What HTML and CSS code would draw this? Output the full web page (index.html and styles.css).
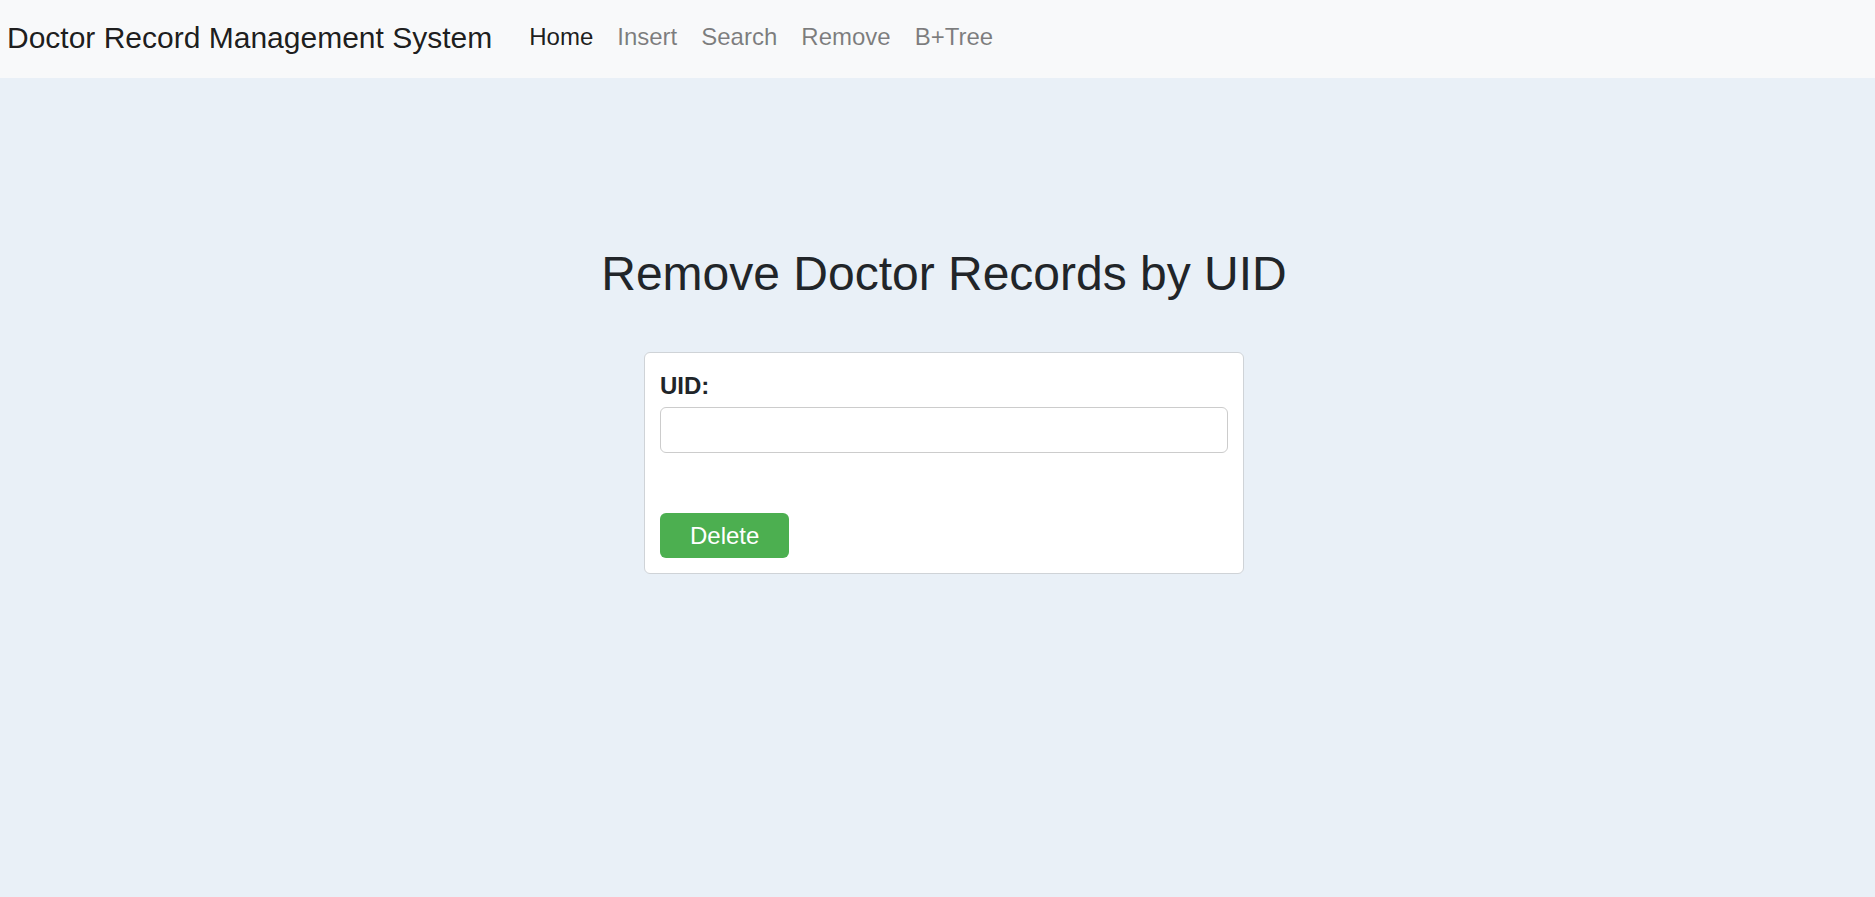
FILE: index.html
```html
<!DOCTYPE html>
<html lang="en">
<head>
<meta charset="utf-8">
<title>Remove Doctor Records</title>
<link rel="stylesheet" href="styles.css">
</head>
<body>
<nav class="navbar">
  <a class="brand" href="#">Doctor Record Management System</a>
  <ul class="nav">
    <li><a class="nav-link active" href="#">Home</a></li>
    <li><a class="nav-link" href="#">Insert</a></li>
    <li><a class="nav-link" href="#">Search</a></li>
    <li><a class="nav-link" href="#">Remove</a></li>
    <li><a class="nav-link" href="#">B+Tree</a></li>
  </ul>
</nav>
<main class="main">
  <h2 class="title">Remove Doctor Records by UID</h2>
  <form class="card">
    <label class="label" for="uid">UID:</label>
    <input class="input" id="uid" type="text">
    <button class="btn" type="button">Delete</button>
  </form>
</main>
</body>
</html>
```
FILE: styles.css
```css
* { box-sizing: border-box; }
html, body { margin: 0; padding: 0; }
body {
  font-family: "Liberation Sans", Arial, sans-serif;
  background: #e9f0f7;
  color: #212529;
  min-height: 897px;
}
.navbar {
  height: 78px;
  background: #f8f9fa;
  display: flex;
  align-items: flex-start;
  padding: 7px 0 0 7px;
}
.brand {
  font-size: 30px;
  line-height: 45px;
  padding: 7.5px 0;
  margin-right: 25px;
  color: rgba(0,0,0,0.9);
  text-decoration: none;
  white-space: nowrap;
}
.nav {
  list-style: none;
  margin: 0;
  padding: 0;
  display: flex;
}
.nav-link {
  display: block;
  font-size: 24px;
  line-height: 36px;
  padding: 12px 12px;
  color: rgba(0,0,0,0.5);
  text-decoration: none;
}
.nav-link.active { color: rgba(0,0,0,0.9); }
.main {
  display: flex;
  flex-direction: column;
  align-items: center;
  padding: 167px 0 0 13px;
}
.title {
  margin: 0 0 49px;
  font-size: 48px;
  line-height: 57.6px;
  font-weight: 400;
  color: #212529;
}
.card {
  width: 600px;
  background: #fff;
  border: 1px solid #cfd3d7;
  border-radius: 6px;
  padding: 15px;
  display: flex;
  flex-direction: column;
  align-items: flex-start;
}
.label {
  font-size: 24px;
  line-height: 36px;
  font-weight: 700;
  margin-bottom: 3px;
}
.input {
  width: 100%;
  height: 46px;
  border: 1px solid #cccccc;
  border-radius: 6px;
  background: #fff;
  font-family: inherit;
  font-size: 24px;
  padding: 0 12px;
  margin: 0 0 60px;
}
.btn {
  font-family: inherit;
  font-size: 24px;
  line-height: 27px;
  padding: 9px 30px;
  background: #4caf50;
  color: #fff;
  border: 0;
  border-radius: 6px;
  cursor: pointer;
}
```
